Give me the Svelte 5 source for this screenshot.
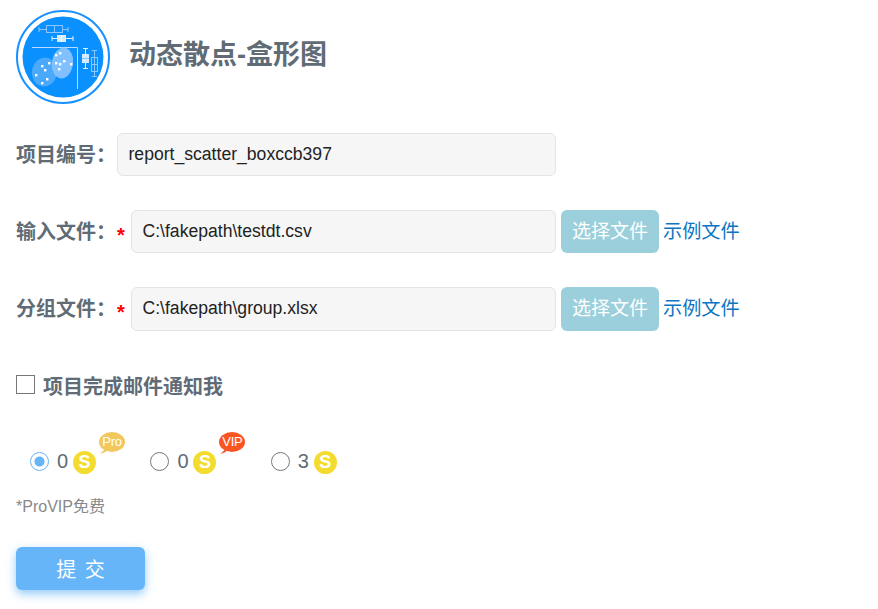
<script>
	let project = 'report_scatter_boxccb397';
	let plan = $state(0);
	let notify = $state(false);

	const files = [
		{ label: '输入文件：', path: 'C:\\fakepath\\testdt.csv' },
		{ label: '分组文件：', path: 'C:\\fakepath\\group.xlsx' }
	];
	const plans = [
		{ cost: 0, tag: 'Pro', color: '#f2c75c' },
		{ cost: 0, tag: 'VIP', color: '#fb5423' },
		{ cost: 3 }
	];
	// scatter points of the logo, in logo coordinates
	const dots = [
		[43, 42], [39, 44], [47, 50], [39, 52], [43, 53], [54, 53], [42, 58],
		[25, 55], [32, 52], [28, 59], [19, 64], [30, 68], [25, 72]
	];
</script>

<main>
	<header>
		<svg class="logo" viewBox="0 0 94 94" width="94" height="94">
			<circle cx="47" cy="47" r="46" fill="#fff" stroke="#1890ff" stroke-width="2" />
			<circle cx="47" cy="47" r="40.500" fill="#0a90ff" />
			<g fill="none" stroke="#8cc8ff" stroke-width="1">
				<path d="M23 19.500h7M23 17v5M52 19.500h-5M52 17v5" />
				<rect x="30.500" y="15.500" width="16" height="7" />
				<path d="M38.500 15.500v7" />
				<path d="M78.500 40v27M76 40.500h5M76 66.500h5" />
				<rect x="75.500" y="47.500" width="6" height="14" />
				<path d="M75.500 54.500h6" />
			</g>
			<path d="M16 37.500H61.500V79" fill="none" stroke="#b8dcff" />
			<g fill="none" stroke="#e3f1ff" stroke-width="1">
				<path d="M36 28.500h5M36 26v5M57 28.500h-7M57 26v5" />
				<path d="M69.500 38v21M67 38.500h5M67 58.500h5" />
			</g>
			<rect x="41" y="25" width="9" height="7" fill="#d5ebff" />
			<path d="M45.500 25v7" stroke="#fff" />
			<rect x="66" y="44" width="7" height="9" fill="#d5ebff" />
			<path d="M66 48.500h7" stroke="#8cc8ff" />
			<ellipse cx="28.500" cy="62" rx="12.500" ry="14.500" transform="rotate(10 28.500 62)" fill="#4ba9fb" />
			<ellipse cx="46.500" cy="53" rx="10.500" ry="15.500" transform="rotate(8 46.500 53)" fill="#80c0ff" />
			{#each dots as [x, y]}
				<rect {x} {y} width="2.400" height="2.400" fill="#fff" />
			{/each}
		</svg>
		<h1>动态散点-盒形图</h1>
	</header>

	<div class="row first">
		<span class="label">项目编号：</span>
		<input class="field" type="text" value={project} />
	</div>

	{#each files as file}
		<div class="row">
			<span class="label">{file.label}</span>
			<span class="star">*</span>
			<input class="field" type="text" value={file.path} readonly />
			<button class="choose" type="button">选择文件</button>
			<a class="sample" href="#sample">示例文件</a>
		</div>
	{/each}

	<label class="notify">
		<input type="checkbox" bind:checked={notify} />
		<span>项目完成邮件通知我</span>
	</label>

	<div class="plans">
		{#each plans as item, i}
			<label class="plan">
				<input type="radio" name="plan" value={i} bind:group={plan} />
				<span class="cost">{item.cost}</span>
				<span class="coin">S</span>
				{#if item.tag}
					<span class="tag" style="background:{item.color};--tag:{item.color}">{item.tag}</span>
				{/if}
			</label>
		{/each}
	</div>

	<p class="hint">*ProVIP免费</p>

	<button class="submit" type="button">提 交</button>
</main>

<style>
	:global(body) {
		background: #fff;
	}
	main {
		padding: 10px 0 18px 16px;
		font-family: "Liberation Sans", "Noto Sans CJK SC", sans-serif;
		color: #606b75;
	}
	header {
		display: flex;
		align-items: center;
		gap: 19px;
		height: 94px;
	}
	.logo {
		display: block;
	}
	h1 {
		margin: 0 0 9px;
		font-size: 27px;
		font-weight: 700;
		color: #606b75;
	}
	.row {
		display: flex;
		align-items: center;
		height: 43.500px;
		margin-top: 33.650px;
	}
	.row.first {
		margin-top: 28.800px;
	}
	.label {
		width: 101px;
		padding-bottom: 3px;
		font-size: 20px;
		font-weight: 700;
		white-space: nowrap;
	}
	.star {
		width: 14px;
		padding-top: 8px;
		box-sizing: border-box;
		color: #f00;
		font-size: 20px;
		font-weight: 700;
	}
	.field {
		box-sizing: border-box;
		height: 43.500px;
		padding: 0 10.500px 1px;
		border: 1px solid #e4e4e4;
		border-radius: 6px;
		background: #f6f6f6;
		color: #222;
		font: 17.600px "Liberation Sans", sans-serif;
		outline: none;
	}
	.row.first .field {
		width: 439px;
	}
	.row:not(.first) .field {
		width: 425px;
	}
	.choose {
		width: 98px;
		height: 43.500px;
		margin-left: 5px;
		padding: 0 0 5px;
		border: 0;
		border-radius: 6px;
		background: #9bcfdb;
		color: #fff;
		font: 19px "Liberation Sans", "Noto Sans CJK SC", sans-serif;
	}
	.sample {
		margin-left: 4px;
		padding-bottom: 4px;
		color: #0b75c4;
		font-size: 19.200px;
		text-decoration: none;
	}
	.notify {
		display: flex;
		align-items: center;
		gap: 8px;
		margin-top: 34px;
		height: 44px;
		font-size: 20px;
		font-weight: 700;
	}
	.notify span {
		padding-bottom: 3px;
	}
	.notify input {
		appearance: none;
		width: 19px;
		height: 19px;
		margin: 0 0 5px;
		border: 1px solid #777;
		background: #fff;
	}
	.plans {
		display: flex;
		margin-top: 38px;
		padding-left: 14px;
		height: 30px;
		align-items: center;
	}
	.plan {
		position: relative;
		display: flex;
		align-items: center;
		width: 120.400px;
		font-size: 20px;
	}
	.plan input {
		appearance: none;
		box-sizing: border-box;
		width: 19px;
		height: 19px;
		margin: 0 8px 0 0;
		border: 1px solid #777;
		border-radius: 50%;
		background: #fff;
	}
	.plan input:checked {
		border-color: #66b5f8;
		background: radial-gradient(circle, #66b5f8 0 4.500px, #fff 5.500px);
	}
	.cost {
		width: 16px;
		color: #606b75;
	}
	.coin {
		width: 23px;
		height: 23px;
		margin-top: 1px;
		border-radius: 50%;
		background: #f3dc2f;
		color: #fff;
		font-size: 18px;
		font-weight: 700;
		line-height: 23px;
		text-align: center;
	}
	.tag {
		position: absolute;
		left: 69px;
		top: -17.500px;
		width: 26px;
		height: 20px;
		border-radius: 50%;
		color: #fff;
		font-size: 13px;
		letter-spacing: -0.300px;
		line-height: 20px;
		text-align: center;
	}
	.tag::after {
		content: "";
		position: absolute;
		left: 1px;
		bottom: -2px;
		width: 6px;
		height: 6px;
		background: var(--tag);
		clip-path: polygon(100% 0, 100% 60%, 0 100%);
	}
	.hint {
		margin: 19px 0 0;
		color: #888;
		font-size: 16px;
		line-height: 22px;
	}
	.submit {
		display: block;
		width: 129px;
		height: 43px;
		margin-top: 29px;
		padding: 0;
		border: 0;
		border-radius: 6px;
		background: #66b5f8;
		box-shadow: 0 4px 10px rgba(102, 181, 248, 0.7);
		color: #fff;
		font: 20px "Liberation Sans", "Noto Sans CJK SC", sans-serif;
		word-spacing: 3px;
		white-space: pre;
	}
</style>
